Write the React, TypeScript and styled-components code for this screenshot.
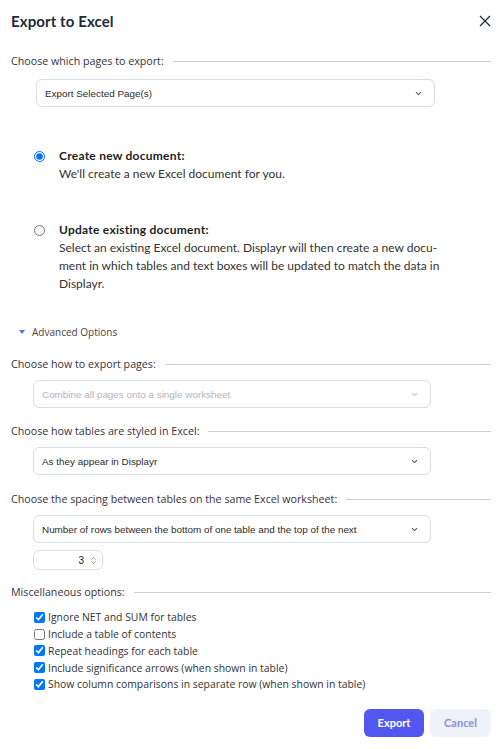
import React from "react";
import styled, { createGlobalStyle } from "styled-components";

const Global = createGlobalStyle`
  html, body { margin: 0; padding: 0; background: #fff; }
  body { font-family: "Open Sans", "Liberation Sans", sans-serif; color: #333; }
  * { box-sizing: border-box; }
`;

const Dialog = styled.div`
  width: 500px;
  height: 749px;
  padding: 0 9px 0 11px;
  display: flex;
  flex-direction: column;
`;

const Header = styled.div`
  height: 42px;
  display: flex;
  align-items: center;
  justify-content: space-between;
`;

const Title = styled.h1`
  margin: 0;
  font-family: "Lato", "Open Sans", sans-serif;
  font-weight: 700;
  font-size: 15px;
  color: #1f2a3c;
  letter-spacing: 0.1px;
`;

const Close = styled.button`
  border: 0;
  background: none;
  padding: 0;
  width: 12px;
  height: 12px;
  display: flex;
  cursor: pointer;
`;

const SectionRow = styled.div<{ $mt: number }>`
  margin-top: ${(p) => p.$mt}px;
  height: 16px;
  display: flex;
  align-items: center;
  gap: 9px;
  font-size: 10.7px;
  color: #35323f;
  white-space: nowrap;
  &::after {
    content: "";
    flex: 1;
    height: 1px;
    background: #c9ced8;
  }
`;

const Select = styled.div<{ $mt: number; $indent: number; $width: number; $disabled?: boolean }>`
  margin-top: ${(p) => p.$mt}px;
  margin-left: ${(p) => p.$indent}px;
  width: ${(p) => p.$width}px;
  height: 28px;
  border: 1px solid #d9dde5;
  border-radius: 6px;
  display: flex;
  align-items: center;
  justify-content: space-between;
  padding: 0 12px 0 8px;
  font-family: "Liberation Sans", "Open Sans", sans-serif;
  font-size: 9.9px;
  color: ${(p) => (p.$disabled ? "#b3b5ba" : "#2b2b2b")};
`;

const Chevron = ({ color }: { color: string }) => (
  <svg width="7" height="5" viewBox="0 0 7 5">
    <path d="M1 1.2 L3.5 3.6 L6 1.2" fill="none" stroke={color} strokeWidth="1.1" />
  </svg>
);

const RadioBlock = styled.label<{ $mt: number }>`
  margin-top: ${(p) => p.$mt}px;
  display: grid;
  grid-template-columns: 48px 1fr;
  font-family: "Lato", "Open Sans", sans-serif;
  font-size: 12px;
  line-height: 18px;
  color: #333;
  padding-right: 40px;
`;

const Radio = styled.input.attrs({ type: "radio" })`
  margin: 4px 0 0 23px;
  width: 11px;
  height: 11px;
`;

const RadioTitle = styled.div`
  font-weight: 700;
  color: #1e1e1e;
  letter-spacing: 0.25px;
`;

const Advanced = styled.div`
  margin-top: 31px;
  height: 16px;
  display: flex;
  align-items: center;
  gap: 7px;
  padding-left: 8px;
  font-size: 10px;
  color: #444;
`;

const NumberBox = styled.div`
  margin-top: 7px;
  margin-left: 22px;
  width: 70px;
  height: 20px;
  border: 1px solid #d9dde5;
  border-radius: 6px;
  display: flex;
  align-items: center;
  justify-content: flex-end;
  gap: 7px;
  padding-right: 6px;
  font-family: "Liberation Sans", sans-serif;
  font-size: 10px;
  color: #222;
`;

const Spinner = styled.div`
  display: flex;
  flex-direction: column;
  gap: 1px;
`;

const CheckList = styled.div`
  margin-top: 9px;
  padding-left: 23px;
  display: flex;
  flex-direction: column;
`;

const CheckRow = styled.label`
  height: 16.75px;
  display: flex;
  align-items: center;
  gap: 3px;
  font-size: 10.4px;
  color: #333;
`;

const Check = styled.input.attrs({ type: "checkbox" })`
  margin: 0;
  width: 11px;
  height: 11px;
`;

const Footer = styled.div`
  margin-top: 16px;
  display: flex;
  justify-content: flex-end;
  gap: 6px;
`;

const Button = styled.button<{ $primary?: boolean }>`
  height: 28px;
  width: ${(p) => (p.$primary ? 60 : 61)}px;
  border: 0;
  border-radius: 6px;
  font-family: "Lato", "Open Sans", sans-serif;
  font-weight: 700;
  font-size: 11px;
  background: ${(p) => (p.$primary ? "#5257ef" : "#eff2f9")};
  color: ${(p) => (p.$primary ? "#fff" : "#8a8fe3")};
`;

const checks: [string, boolean][] = [
  ["Ignore NET and SUM for tables", true],
  ["Include a table of contents", false],
  ["Repeat headings for each table", true],
  ["Include significance arrows (when shown in table)", true],
  ["Show column comparisons in separate row (when shown in table)", true],
];

export default function App() {
  return (
    <Dialog>
      <Global />
      <Header>
        <Title>Export to Excel</Title>
        <Close aria-label="Close">
          <svg width="12" height="12" viewBox="0 0 12 12">
            <path d="M1 1 L11 11 M11 1 L1 11" stroke="#1f2a3c" strokeWidth="1.3" />
          </svg>
        </Close>
      </Header>

      <SectionRow $mt={11}>Choose which pages to export:</SectionRow>
      <Select $mt={10} $indent={25} $width={399}>
        <span>Export Selected Page(s)</span>
        <Chevron color="#555" />
      </Select>

      <RadioBlock $mt={40}>
        <Radio name="doc" defaultChecked />
        <div>
          <RadioTitle>Create new document:</RadioTitle>
          <div>We'll create a new Excel document for you.</div>
        </div>
      </RadioBlock>

      <RadioBlock $mt={38}>
        <Radio name="doc" />
        <div>
          <RadioTitle>Update existing document:</RadioTitle>
          <div>
            Select an existing Excel document. Displayr will then create a new docu-
            <br />
            ment in which tables and text boxes will be updated to match the data in
            <br />
            Displayr.
          </div>
        </div>
      </RadioBlock>

      <Advanced>
        <svg width="6" height="4" viewBox="0 0 6 4">
          <path d="M0 0 H6 L3 4 Z" fill="#3b7ddd" />
        </svg>
        Advanced Options
      </Advanced>

      <SectionRow $mt={16}>Choose how to export pages:</SectionRow>
      <Select $mt={8} $indent={22} $width={398} $disabled>
        <span>Combine all pages onto a single worksheet</span>
        <Chevron color="#c4c6cb" />
      </Select>

      <SectionRow $mt={15}>Choose how tables are styled in Excel:</SectionRow>
      <Select $mt={8} $indent={22} $width={398}>
        <span>As they appear in Displayr</span>
        <Chevron color="#555" />
      </Select>

      <SectionRow $mt={16}>Choose the spacing between tables on the same Excel worksheet:</SectionRow>
      <Select $mt={8} $indent={22} $width={398}>
        <span>Number of rows between the bottom of one table and the top of the next</span>
        <Chevron color="#555" />
      </Select>
      <NumberBox>
        <span>3</span>
        <Spinner>
          <svg width="5" height="3" viewBox="0 0 5 3">
            <path d="M0.5 2.6 L2.5 0.6 L4.5 2.6" fill="none" stroke="#777" strokeWidth="0.8" />
          </svg>
          <svg width="5" height="3" viewBox="0 0 5 3">
            <path d="M0.5 0.4 L2.5 2.4 L4.5 0.4" fill="none" stroke="#777" strokeWidth="0.8" />
          </svg>
        </Spinner>
      </NumberBox>

      <SectionRow $mt={14}>Miscellaneous options:</SectionRow>
      <CheckList>
        {checks.map(([label, on]) => (
          <CheckRow key={label}>
            <Check defaultChecked={on} />
            {label}
          </CheckRow>
        ))}
      </CheckList>

      <Footer>
        <Button $primary>Export</Button>
        <Button>Cancel</Button>
      </Footer>
    </Dialog>
  );
}
